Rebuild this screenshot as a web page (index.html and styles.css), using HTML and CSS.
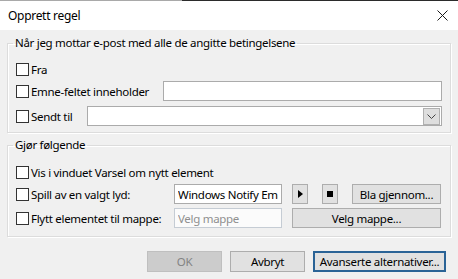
FILE: index.html
```html
<!DOCTYPE html>
<html lang="nb">
<head>
    <meta charset="UTF-8">
    <meta name="viewport" content="width=device-width, initial-scale=1.0">
    <link rel="stylesheet" href="styles.css">
</head>
<body>
    <div class="window">
        <div class="titlebar">
            <span class="title">Opprett regel</span>
            <svg class="close" width="11" height="11" viewBox="0 0 11 11">
                <path d="M0.5 0.5 L10.5 10.5 M10.5 0.5 L0.5 10.5" stroke="#1a1a1a" stroke-width="1" fill="none"/>
            </svg>
        </div>

        <div class="content">
            <fieldset class="group group-when">
                <legend>Når jeg mottar e-post med alle de angitte betingelsene</legend>

                <div class="row">
                    <label class="check"><input type="checkbox" class="box">Fra</label>
                </div>

                <div class="row row-subject">
                    <label class="check label-subject"><input type="checkbox" class="box">Emne-feltet inneholder</label>
                    <input type="text" class="field field-wide">
                </div>

                <div class="row row-sent">
                    <label class="check label-sent"><input type="checkbox" class="box">Sendt til</label>
                    <div class="field combo">
                        <span class="drop">
                            <svg width="9" height="5" viewBox="0 0 9 5"><path d="M0.5 0.5 L4.5 4.5 L8.5 0.5" stroke="#444" stroke-width="1" fill="none"/></svg>
                        </span>
                    </div>
                </div>
            </fieldset>

            <fieldset class="group group-do">
                <legend>Gjør følgende</legend>

                <div class="row">
                    <label class="check"><input type="checkbox" class="box">Vis i vinduet Varsel om nytt element</label>
                </div>

                <div class="row row-sound">
                    <label class="check label-action"><input type="checkbox" class="box">Spill av en valgt lyd:</label>
                    <input type="text" class="field field-short" value="Windows Notify Email">
                    <button class="btn btn-icon btn-play">
                        <svg width="5" height="8" viewBox="0 0 5 8"><path d="M0 0 L5 4 L0 8 Z" fill="#000"/></svg>
                    </button>
                    <button class="btn btn-icon btn-stop">
                        <svg width="6" height="6" viewBox="0 0 6 6"><rect width="6" height="6" fill="#000"/></svg>
                    </button>
                    <button class="btn btn-browse">Bla gjennom...</button>
                </div>

                <div class="row row-folder">
                    <label class="check label-action"><input type="checkbox" class="box">Flytt elementet til mappe:</label>
                    <input type="text" class="field field-short field-disabled" placeholder="Velg mappe" disabled>
                    <button class="btn btn-folder">Velg mappe...</button>
                </div>
            </fieldset>

            <div class="footer">
                <button class="btn btn-dialog" disabled>OK</button>
                <button class="btn btn-dialog">Avbryt</button>
                <button class="btn btn-dialog btn-default">Avanserte alternativer...</button>
            </div>
        </div>
    </div>
</body>
</html>
```

FILE: styles.css
```css
* {
    box-sizing: border-box;
}

body {
    margin: 0;
    font-family: "Noto Sans", "Open Sans", sans-serif;
    font-size: 11.5px;
    letter-spacing: -0.3px;
    color: #000;
    background-color: #f0f0f0;
}

.window {
    width: 458px;
    height: 279px;
    background-color: #f0f0f0;
    border-top: 1px solid #2b2b2b;
    border-image: linear-gradient(to right, #a9a9a9 182px, #2b2b2b 182px) 1;
}

.titlebar {
    height: 29px;
    background-color: #fff;
    display: flex;
    align-items: center;
    justify-content: space-between;
    padding: 0 10px 0 8px;
    line-height: 16px;
}

.title {
    font-size: 12px;
}

.close {
    display: block;
}

.content {
    padding: 5px 7px 0;
}

.group {
    margin: 0;
    padding: 8px 8px 6px;
    border: 1px solid #dcdcdc;
    box-shadow: inset 1px 1px 0 #fff, 1px 1px 0 #fff;
    min-width: 0;
}

.group legend {
    margin-left: -3px;
    padding: 0 2px;
    line-height: 16px;
}

.group-do {
    margin-top: 4px;
    padding: 9px 8px 8px;
}

.row {
    display: flex;
    align-items: center;
    height: 20px;
}

.row-subject {
    margin-top: 2px;
}

.row-sent {
    margin-top: 5px;
}

.row-sound {
    margin-top: 2px;
}

.row-folder {
    margin-top: 4px;
}

.check {
    display: flex;
    align-items: center;
    white-space: nowrap;
    flex-shrink: 0;
}

.label-subject {
    width: 147px;
}

.label-sent {
    width: 71px;
}

.label-action {
    width: 158px;
}

.box {
    -webkit-appearance: none;
    appearance: none;
    width: 13px;
    height: 13px;
    margin: 0 2px 0 0;
    border: 1px solid #333;
    background-color: #fff;
}

.field {
    height: 20px;
    border: 1px solid #ababab;
    background-color: #fff;
    font: inherit;
    letter-spacing: inherit;
    color: #000;
    padding: 0 3px;
    margin: 0;
    outline: none;
}

.field-wide {
    flex: 1;
    min-width: 0;
}

.field-short {
    width: 108px;
}

.field-disabled {
    background-color: #fbfbfb;
    border-color: #c5ccd4;
}

.field-disabled::placeholder {
    color: #8f8f8f;
}

.combo {
    flex: 1;
    display: flex;
    align-items: center;
    justify-content: flex-end;
    padding: 0 1px;
}

.drop {
    width: 17px;
    height: 17px;
    border: 1px solid #b0b0b0;
    background-color: #dedede;
    display: flex;
    align-items: center;
    justify-content: center;
    padding-top: 1px;
}

.btn {
    font: inherit;
    letter-spacing: inherit;
    color: #000;
    height: 20px;
    margin: 0;
    padding: 0;
    border: 1px solid #adadad;
    background-color: #e1e1e1;
    display: flex;
    align-items: center;
    justify-content: center;
    white-space: nowrap;
}

.btn-icon {
    width: 16px;
}

.btn-play {
    margin-left: 10px;
}

.btn-stop {
    margin-left: 14px;
}

.btn-browse {
    margin-left: 14px;
    width: 89px;
}

.btn-folder {
    margin-left: 10px;
    width: 149px;
}

.footer {
    display: flex;
    justify-content: flex-end;
    gap: 8px;
    margin-top: 14px;
    padding-right: 5px;
}

.btn-dialog {
    width: 75px;
    height: 21px;
}

.btn-dialog:disabled {
    background-color: #cccccc;
    border-color: #bfbfbf;
    color: #838383;
}

.btn-default {
    width: 133px;
    border: 2px solid #2a6396;
}
```
